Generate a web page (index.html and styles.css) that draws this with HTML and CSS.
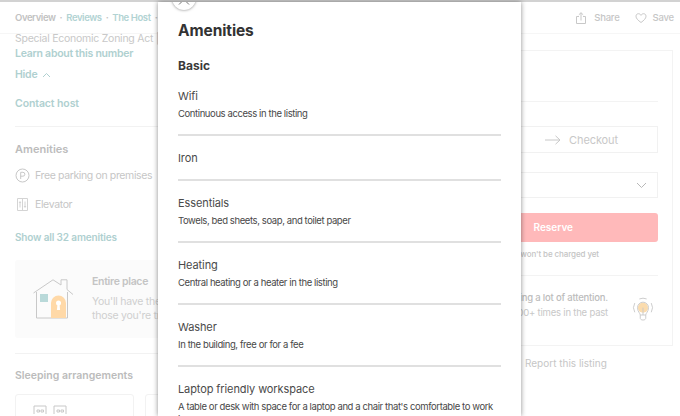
FILE: index.html
```html
<!DOCTYPE html>
<html>
<head>
	<title>Amenities</title>
	<meta http-equiv="Content-Type" content="text/html;charset=utf-8" />
	<link rel="stylesheet" href="styles.css">
</head>
<body>

<div class="page">
	<div class="topnav">
		<a class="nav-on">Overview</a><span class="dot">·</span><a>Reviews</a><span class="dot">·</span><a>The Host</a><span class="dot">·</span><a>Location</a>
		<div class="nav-tools">
			<svg class="tool-icon" width="10" height="12" viewBox="0 0 10 12"><path d="M3 4.500H.5v7h9v-7H7M5 8.500V.8M2.800 2.800 5 .7l2.200 2.100"/></svg>
			<span class="tool-label">Share</span>
			<svg class="tool-icon heart" width="12" height="12" viewBox="0 0 12 12"><path d="M6 10.500C3 8.300 1 6.500 1 4.200 1 2.700 2.100 1.700 3.400 1.700c1.100 0 2 .6 2.600 1.600.6-1 1.500-1.600 2.600-1.600C9.900 1.700 11 2.700 11 4.200c0 2.300-2 4.100-5 6.300z"/></svg>
			<span class="tool-label">Save</span>
		</div>
	</div>

	<div class="columns">
		<div class="main">
			<div class="legal">Special Economic Zoning Act | Licensed</div>
			<a class="link learn">Learn about this number</a>
			<a class="link hide">Hide <svg width="9" height="6" viewBox="0 0 9 6"><path d="M1 5l3.500-3.500L8 5"/></svg></a>
			<a class="link contact">Contact host</a>
			<div class="rule first-rule"></div>

			<h3 class="sec-title">Amenities</h3>
			<div class="amenity">
				<svg width="15" height="15" viewBox="0 0 15 15"><circle cx="7.500" cy="7.500" r="6.500"/><path d="M5.700 11V4.300h2.200a1.900 1.900 0 0 1 0 3.900H5.700"/></svg>
				Free parking on premises
			</div>
			<div class="amenity">
				<svg class="lift" width="15" height="15" viewBox="0 0 15 15"><path d="M2.500 1.500h10v12h-10zM7.500 1.500v12M5 4.500v6M10 4.500v6M4 6l1-1.200L6 6M9 9l1 1.200L11 9"/></svg>
				Elevator
			</div>
			<a class="link show-all">Show all 32 amenities</a>

			<div class="place-box">
				<svg class="house" width="41" height="40" viewBox="0 0 41 40">
					<path class="house-line" d="M.5 14 20 .8l8 5.200V.8h6v9.700l6 5M3.500 13v26h31V13"/>
					<rect class="house-win" x="7" y="15" width="8" height="8"/>
					<path class="house-door" d="M18 39V24a7.500 7.500 0 0 1 15 0v15z"/>
					<circle class="house-key" cx="25.500" cy="24" r="2.500"/>
					<path class="house-key" d="M24.500 25h2l.6 6h-3.200z"/>
				</svg>
				<div class="place-text">
					<div class="place-title">Entire place</div>
					<div class="place-desc">You'll have the apartment to yourself, and only<br>those you're traveling with</div>
				</div>
			</div>
			<div class="rule"></div>

			<h3 class="sec-title sleep-title">Sleeping arrangements</h3>
			<div class="sleep-cards">
				<div class="sleep-card">
					<svg width="34" height="10" viewBox="0 0 34 10"><path d="M1 10V2h12v8M4 6h2.500v2H4zM8 6h2.500v2H8zM21 10V2h12v8M24 6h2.500v2H24zM28 6h2.500v2H28z"/></svg>
				</div>
				<div class="sleep-card"></div>
			</div>
		</div>

		<div class="side">
			<div class="book-card">
				<div class="side-rule"></div>
				<div class="date-box">
					<svg width="16" height="10" viewBox="0 0 16 10"><path d="M0 5h15M10.500.8 15 5l-4.500 4.200"/></svg>
					<span>Checkout</span>
				</div>
				<div class="guest-box">
					<svg width="11" height="7" viewBox="0 0 11 7"><path d="M1 1l4.500 4.500L10 1"/></svg>
				</div>
				<div class="reserve"><span>Reserve</span></div>
				<div class="charge">You won't be charged yet</div>
				<div class="side-rule attention-rule"></div>
				<div class="attention">
					<div class="attention-text">
						<div class="attention-main">This place is getting a lot of attention.</div>
						<div class="attention-sub">It's been viewed 500+ times in the past</div>
					</div>
					<svg class="bulb" width="22" height="25" viewBox="0 0 24 26">
						<circle class="bulb-fill" cx="12" cy="11" r="5.500"/>
						<path class="bulb-line" d="M9 19c0-2-3-3.500-3-8a6 6 0 0 1 12 0c0 4.500-3 6-3 8zM9 19v3.500c0 1 1 2 3 2s3-1 3-2V19M12 19v-8M3 6A10 10 0 0 0 3 16M21 6a10 10 0 0 1 0 10M8 1.500a10 10 0 0 1 8 0"/>
					</svg>
				</div>
			</div>
			<div class="report">Report this listing</div>
		</div>
	</div>
</div>

<div class="modal">
	<div class="close-btn">
		<svg width="12" height="6" viewBox="0 0 12 6"><path d="M1 5.500l5-5 5 5"/></svg>
	</div>
	<h1>Amenities</h1>
	<h2>Basic</h2>
	<div class="item">
		<div class="item-name">Wifi</div>
		<div class="item-sub">Continuous access in the listing</div>
	</div>
	<div class="item">
		<div class="item-name">Iron</div>
	</div>
	<div class="item">
		<div class="item-name">Essentials</div>
		<div class="item-sub">Towels, bed sheets, soap, and toilet paper</div>
	</div>
	<div class="item">
		<div class="item-name">Heating</div>
		<div class="item-sub">Central heating or a heater in the listing</div>
	</div>
	<div class="item">
		<div class="item-name">Washer</div>
		<div class="item-sub">In the building, free or for a fee</div>
	</div>
	<div class="item">
		<div class="item-name">Laptop friendly workspace</div>
		<div class="item-sub">A table or desk with space for a laptop and a chair that's comfortable to work in</div>
	</div>
</div>

</body>
</html>
```

FILE: styles.css
```css
html { height:100%; }
body { height:416px; overflow:hidden; margin:0; padding:0; font-family:"Inter", "Liberation Sans", sans-serif; color:#c4c4c4; background-color:#fff; position:relative; }
svg { fill:none; stroke:#c8c8c8; stroke-width:1; display:block; flex:none; }
h1, h2, h3 { margin:0; }

.page { height:416px; overflow:hidden; border-top:2px solid #d2d2d2; box-sizing:border-box; }

.topnav { height:31px; display:flex; align-items:center; padding:0 6px 0 15px; font-size:9.500px; font-weight:600; letter-spacing:-.4px; color:#b2d3d3; border-bottom:1px solid #f6f6f6; white-space:nowrap; }
.nav-on { color:#c2c2c2; }
.dot { margin:0 4px; color:#c2c2c2; }
.nav-tools { margin-left:auto; display:flex; align-items:center; }
.tool-icon { margin-right:8px; }
.heart { margin-right:6px; }
.tool-label { color:#c6c6c6; font-size:9.500px; font-weight:500; letter-spacing:-.2px; margin-right:15px; }
.tool-label:last-child { margin-right:0; }

.columns { display:flex; padding:0 7px 0 15px; }
.main { width:460px; flex:none; font-size:10.500px; letter-spacing:-.25px; }
.side { width:178px; flex:none; margin-left:20px; }

.legal { line-height:10px; color:#c8c8c8; white-space:nowrap; }
.link { display:block; color:#afd0d0; font-weight:600; font-size:10.500px; line-height:14px; }
.learn { margin-top:3px; }
.hide { margin-top:7px; display:flex; align-items:center; gap:5px; }
.hide svg { stroke:#afd0d0; }
.contact { margin-top:15px; letter-spacing:-.1px; }
.rule { height:1px; background:#f2f2f2; }
.first-rule { margin-top:15px; }

.sec-title { font-size:11px; font-weight:600; letter-spacing:0; color:#bcbcbc; line-height:14px; margin-top:15px; }
.amenity { display:flex; align-items:center; gap:5px; height:15px; margin-top:12px; white-space:nowrap; letter-spacing:-.37px; color:#c6c6c6; }
.amenity + .amenity { margin-top:14px; }
.lift { stroke:#d4d4d4; }
.show-all { margin-top:18px; font-size:10px; letter-spacing:-.15px; }

.place-box { display:flex; height:78px; margin-top:16px; background:#fbfbfb; border-radius:3px; margin-bottom:15px; padding:0 0 0 18px; box-sizing:border-box; }
.house { margin-top:19px; stroke:#c8c8c8; }
.house-win { fill:#b9d9d9; stroke:none; }
.house-door { fill:#ffd9a8; stroke:none; }
.house-key { fill:#fff; stroke:none; }
.place-text { margin-left:18px; padding-top:15px; white-space:nowrap; }
.place-title { font-weight:600; color:#c4c4c4; line-height:14px; font-size:10.500px; letter-spacing:-.3px; }
.place-desc { margin-top:6px; line-height:14px; color:#cfcfcf; }

.sleep-title { margin-top:15px; font-size:10.500px; }
.sleep-cards { display:flex; gap:11px; margin-top:11px; }
.sleep-card { width:119px; height:60px; border:1px solid #f2f2f2; border-radius:3px; padding-top:9px; box-sizing:border-box; }
.sleep-card svg { margin-left:17px; }

.book-card { height:296px; margin-top:16px; border:1px solid #f3f3f3; box-sizing:border-box; padding:0 14px 0 15px; }
.side-rule { height:1px; background:#f3f3f3; margin-top:50px; }
.date-box { height:27px; margin-top:24px; border:1px solid #f1f1f1; display:flex; align-items:center; justify-content:flex-end; gap:8px; box-sizing:border-box; padding-right:39px; font-size:11px; letter-spacing:-.1px; color:#c8c8c8; }
.guest-box { height:26px; margin-top:19px; border:1px solid #f1f1f1; display:flex; align-items:center; justify-content:flex-end; box-sizing:border-box; padding-right:10px; }
.guest-box svg { stroke:#b8b8b8; }
.reserve { height:29px; margin-top:15px; background:#ffb9ba; border-radius:3px; color:#fff; font-size:10px; font-weight:600; line-height:29px; text-align:right; padding-right:85px; }
.charge { display:flex; justify-content:flex-end; margin-top:6px; font-size:8px; font-weight:500; letter-spacing:-.1px; line-height:12px; padding-right:59px; color:#c4c4c4; white-space:nowrap; }
.attention-rule { margin-top:15px; }
.attention { display:flex; justify-content:flex-end; align-items:flex-start; margin-top:14px; white-space:nowrap; }
.attention-text { margin-right:24px; font-size:9.500px; line-height:15px; letter-spacing:-.2px; text-align:right; }
.attention-main { color:#bcbcbc; font-weight:500; }
.attention-sub { color:#c8c8c8; }
.bulb { margin-top:7px; margin-right:4px; }
.bulb-fill { fill:#fbdcae; stroke:none; }
.report { margin-top:10px; font-size:10px; color:#c6c6c6; line-height:14px; padding-left:30px; white-space:nowrap; }

/* dialog on top of the page */
.modal { position:absolute; left:158px; top:2px; width:363px; height:414px; overflow:hidden; box-sizing:border-box; padding:19px 20px 0; background:#fff; box-shadow:0 0 5px rgba(0,0,0,.45); color:#484848; }
.close-btn { position:absolute; left:14px; top:-16px; width:24px; height:24px; border-radius:50%; background:#fff; box-shadow:0 0 3px rgba(0,0,0,.5); display:flex; align-items:flex-end; justify-content:center; padding-bottom:5px; box-sizing:border-box; }
.close-btn svg { stroke:#777; }
.modal h1 { font-size:15.500px; font-weight:700; line-height:20px; letter-spacing:-.1px; color:#333; }
.modal h2 { font-size:12px; font-weight:700; line-height:16px; margin-top:17px; color:#3a3a3a; }
.item { border-bottom:2px solid #e0e0e0; padding:14px 0 13px; }
.item-name { font-size:11px; line-height:16px; letter-spacing:-.1px; color:#4a4a4a; }
.item-sub { font-size:9.500px; line-height:13px; margin:3px 0 1px; letter-spacing:-.4px; color:#484848; }
```
